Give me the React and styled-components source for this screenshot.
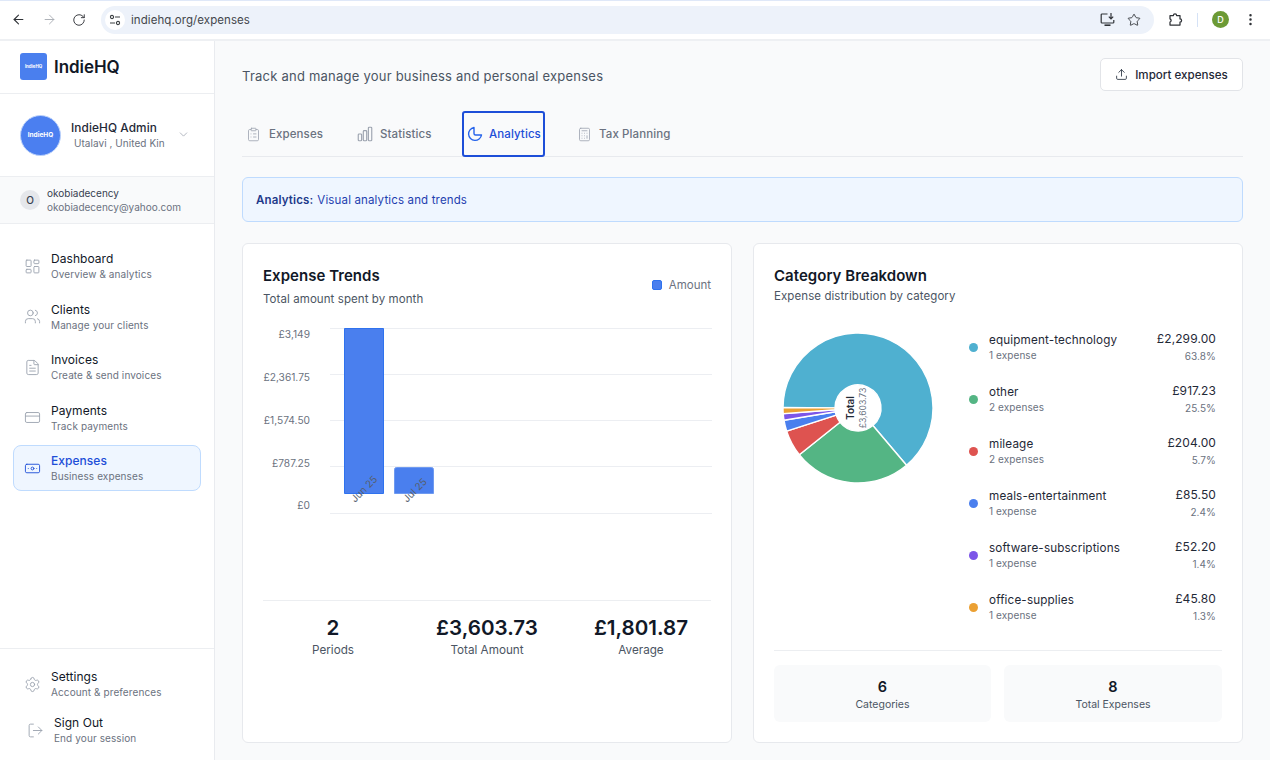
import React from "react";
import styled, { createGlobalStyle } from "styled-components";
import {
  ArrowLeft, ArrowRight, RotateCw, Star, MoreVertical, ChevronDown, LayoutDashboard, Users,
  FileText, CreditCard, Banknote, Settings, LogOut, Upload, ClipboardList, Calculator,
} from "lucide-react";
import { HiOutlineChartBar } from "react-icons/hi2";

const Global = createGlobalStyle`
  html, body { margin: 0; padding: 0; height: 760px; overflow: hidden; background: #f9fafb; }
  body { font-family: Inter, "Liberation Sans", sans-serif; color: #111827; -webkit-font-smoothing: antialiased; }
  * { box-sizing: border-box; }
`;

const Page = styled.div`width: 1270px; height: 760px; display: flex; flex-direction: column; overflow: hidden;`;
const Chrome = styled.header`
  height: 41px; flex: none; background: #fff; border-top: 1px solid #dfe8f8; border-bottom: 2px solid #eef0f3;
  display: flex; align-items: center; padding: 0 8px 1px 11px; color: #2f3237;
`;
const NavIcons = styled.div`display: flex; align-items: center; gap: 15.5px; width: 90px; svg { display: block; }`;
const Omnibox = styled.div`
  width: 1053px; height: 28px; border-radius: 14px; background: #edf2fa; display: flex; align-items: center;
  padding: 0 13px 0 4px; font-size: 11.5px; letter-spacing: .07px; color: #44474c; gap: 6px;
`;
const SiteIcon = styled.span`width: 20px; height: 20px; border-radius: 50%; background: #fff; display: flex; align-items: center; justify-content: center;`;
const Spacer = styled.span`flex: 1;`;
const OmniActions = styled.div`display: flex; align-items: center; gap: 12px; svg { display: block; }`;
const ChromeEnd = styled.div`display: flex; align-items: center; margin-left: 14px; gap: 0;`;
const Divider = styled.span`width: 1px; height: 14px; background: #d5e2f6; margin: 0 14px 0 14px;`;
const ProfileDot = styled.span`width: 17px; height: 17px; border-radius: 50%; background: #6c9a35; color: #fff; font-size: 9px; font-weight: 500; display: flex; align-items: center; justify-content: center; margin-right: 14px;`;

const Body = styled.div`flex: 1; display: flex; min-height: 0;`;
const Sidebar = styled.aside`width: 215px; flex: none; background: #fff; border-right: 1px solid #e9ebef; display: flex; flex-direction: column;`;
const Brand = styled.div`height: 53px; padding: 0 20px 1px; border-bottom: 1px solid #eceef1; display: flex; align-items: center; gap: 7px;`;
const LogoMark = styled.div`
  width: 27px; height: 27px; border-radius: 3px; background: #4a7fee; color: #fff; font-size: 4.4px; font-weight: 700;
  display: flex; align-items: center; justify-content: center;
`;
const BrandName = styled.span`font-size: 17px; font-weight: 600; color: #111827; letter-spacing: -.05px;`;
const Profile = styled.div`height: 82px; display: flex; align-items: center; padding: 0 20px;`;
const Avatar = styled.div`
  width: 41px; height: 41px; border-radius: 50%; background: #4b7ff0; border: 1px solid #bcd2fb; color: #fff; font-size: 6.5px; font-weight: 700;
  display: flex; align-items: center; justify-content: center; flex: none; margin-right: 10px;
`;
const ProfileText = styled.div`display: flex; flex-direction: column; width: 106px; margin-top: 1px;`;
const ProfileName = styled.span`font-size: 11.8px; font-weight: 500; letter-spacing: .1px; color: #1f2937; line-height: 15px;`;
const ProfileSub = styled.span`font-size: 10px; letter-spacing: .05px; color: #6b7280; line-height: 14px; padding-left: 3px;`;
const ProfileChevron = styled.span`display: flex; margin-top: -2px;`;
const Account = styled.div`
  height: 48px; background: #f9fafb; border-top: 1px solid #eceef1; border-bottom: 1px solid #eceef1;
  display: flex; align-items: center; padding: 0 20px; gap: 7px;
`;
const AccountBadge = styled.span`width: 20px; height: 20px; border-radius: 50%; background: #e5e7eb; color: #374151; font-size: 10px; font-weight: 500; display: flex; align-items: center; justify-content: center;`;
const AccountText = styled.div`display: flex; flex-direction: column; font-size: 10px; line-height: 14px; color: #374151; span + span { color: #6b7280; }`;
const Nav = styled.nav`flex: 1; padding: 19px 13px 0; display: flex; flex-direction: column; gap: 4.6px;`;
const NavItem = styled.a`
  height: 46px; border-radius: 8px; display: flex; align-items: center; gap: 10px; padding: 0 0 0 ${p => p.$indent || 10}px;
  border: 1px solid ${p => p.$active ? "#bfdbfe" : "transparent"}; background: ${p => p.$active ? "#eff6ff" : "transparent"};
  svg { color: ${p => p.$active ? "#1d4ed8" : "#9ca3af"}; flex: none; }
`;
const NavText = styled.div`display: flex; flex-direction: column; gap: 1px;`;
const NavTitle = styled.span`font-size: 12px; line-height: 15px; font-weight: ${p => p.$active ? 500 : 400}; color: ${p => p.$active ? "#1d4ed8" : "#111827"}; letter-spacing: .05px;`;
const NavSub = styled.span`font-size: 10px; line-height: 14px; color: #6b7280; letter-spacing: .1px;`;
const SideFoot = styled.div`border-top: 1px solid #eceef1; height: 112px; padding: 12px 13px 0; display: flex; flex-direction: column;`;

const Main = styled.main`flex: 1; min-width: 0; padding: 17px 27px 0; display: flex; flex-direction: column;`;
const TopRow = styled.div`height: 33px; display: flex; align-items: center; justify-content: space-between;`;
const Lead = styled.p`margin: 3px 0 0; font-size: 13px; color: #4b5563; letter-spacing: .23px;`;
const ImportButton = styled.button`
  width: 143px; height: 33px; border: 1px solid #e2e4e8; border-radius: 5px; background: #fff; font: 500 11.6px Inter, sans-serif; color: #1f2937;
  display: flex; align-items: center; justify-content: center; gap: 7px;
`;
const Tabs = styled.div`margin-top: 20px; height: 46px; border-bottom: 1px solid #e8eaee; display: flex;`;
const Tab = styled.div`
  height: 46px; flex: none; display: flex; align-items: center; gap: ${p => p.$iconGap}px; font-size: 11.5px; font-weight: 500; letter-spacing: .1px;
  padding: 0 0 0 ${p => p.$active ? "3px" : "0"};
  margin-left: ${p => p.$gap}px; width: ${p => p.$w}px;
  color: ${p => p.$active ? "#1d4ed8" : "#6b7280"};
  border: ${p => p.$active ? "2px solid #1d4ed8" : "none"}; border-radius: 3px;
  svg { flex: none; color: ${p => p.$active ? "#2563eb" : "#9ca3af"}; }
`;
const Notice = styled.div`
  margin-top: 20px; height: 45px; border: 1px solid #bfdbfe; border-radius: 6px; background: #eff6ff; padding: 0 13px;
  display: flex; align-items: center; font-size: 11.5px; letter-spacing: .15px; color: #1e40af; gap: 4px;
  strong { font-weight: 600; color: #1e3a8a; }
`;
const Cards = styled.div`margin-top: 21px; display: grid; grid-template-columns: 490px 490px; gap: 21px;`;
const Card = styled.section`height: 500px; background: #fff; border: 1px solid #e7e9ed; border-radius: 6px; padding: 22px 20px 0; display: flex; flex-direction: column;`;
const CardHead = styled.div`display: flex; justify-content: space-between;`;
const CardTitle = styled.h2`margin: 0; font-size: 15px; line-height: 20px; font-weight: 600; letter-spacing: .03px; color: #111827;`;
const CardSub = styled.p`margin: ${p => p.$gap}px 0 0; font-size: 11.5px; line-height: 15px; color: #4b5563; letter-spacing: .08px;`;
const Legend = styled.div`display: flex; align-items: center; gap: 7px; height: 16px; margin-top: 11px; font-size: 11.5px; color: #6b7280;`;
const LegendSwatch = styled.span`width: 10px; height: 10px; border-radius: 2px; background: #4a7fee; border: 1px solid #2f72ee;`;
const ChartSvg = styled.svg`display: block; margin-top: 15px; flex: none;`;
const Stats = styled.div`border-top: 1px solid #eceef1; margin-top: 78px; padding-top: 14px; display: grid; grid-template-columns: 140px 1fr 140px; text-align: center;`;
const StatValue = styled.div`font-size: 20.6px; line-height: 26px; font-weight: 600; color: #111827;`;
const StatLabel = styled.div`font-size: 11.7px; line-height: 16px; margin-top: 1px; color: #4b5563;`;
const Breakdown = styled.div`display: flex; margin-top: 12px; height: 327px;`;
const PieSvg = styled.svg`display: block; flex: none; margin: 7px 0 0 0; `;
const CatList = styled.div`margin-left: 27px; width: 247px; display: flex; flex-direction: column; padding-top: 5px;`;
const CatRow = styled.div`height: 52px; display: flex; align-items: center; gap: 11px;`;
const Dot = styled.span`width: 9px; height: 9px; border-radius: 50%; background: ${p => p.$c}; flex: none;`;
const CatMain = styled.div`flex: 1; display: flex; justify-content: space-between;`;
const CatCol = styled.div`display: flex; flex-direction: column; gap: ${p => p.$right ? 2 : 0}px; padding-top: ${p => p.$right ? 0 : 1}px; text-align: ${p => p.$right ? "right" : "left"};`;
const CatName = styled.span`font-size: 11.7px; line-height: 16px; letter-spacing: .14px; color: #1f2937;`;
const CatMeta = styled.span`font-size: 10px; line-height: 14px; letter-spacing: .08px; color: #6b7280;`;
const CatAmount = styled.span`font-size: 12px; line-height: 16px; letter-spacing: .1px; font-weight: 400; color: #1f2937;`;
const Totals = styled.div`border-top: 1px solid #eceef1; margin-top: 7px; padding-top: 14px; display: grid; grid-template-columns: 217px 218px; gap: 13px;`;
const Tile = styled.div`height: 57px; border-radius: 6px; background: #f9fafb; text-align: center; padding-top: 12px;`;
const TileValue = styled.div`font-size: 14.5px; line-height: 20px; font-weight: 600; color: #111827;`;
const TileLabel = styled.div`font-size: 10.5px; line-height: 14px; margin-top: 1px; color: #4b5563;`;

const TuneIcon = () => (
  <svg width="12" height="12" viewBox="0 0 12 12" fill="none" stroke="#3c4043" strokeWidth="1.1">
    <circle cx="3" cy="3" r="1.6" /><path d="M6 3h5M1 9h5" /><circle cx="9" cy="9" r="1.6" />
  </svg>
);
const InstallIcon = () => (
  <svg width="15" height="15" viewBox="0 0 15 15" fill="none" stroke="#2f3237" strokeWidth="1.2">
    <path d="M7.5 2H2a.8.8 0 0 0-.8.8v7.4A.8.8 0 0 0 2 11h11a.8.8 0 0 0 .8-.8V8" />
    <path d="M4.5 13.2h6" strokeWidth="1.6" /><path d="M11 1v5.5M8.8 4.6 11 6.8l2.2-2.2" />
  </svg>
);
const ExtensionIcon = () => (
  <svg width="15" height="15" viewBox="0 0 15 15" fill="none" stroke="#2f3237" strokeWidth="1.25" strokeLinejoin="round">
    <path d="M2 3.5h3.4a1.6 1.6 0 0 1 3.2 0H12v3.4a1.6 1.6 0 0 1 0 3.2V13H2v-2.9a1.7 1.7 0 0 0 0-3.2z" />
  </svg>
);
const PieTabIcon = () => (
  <svg width="16" height="16" viewBox="0 0 16 16" fill="none" stroke="currentColor" strokeWidth="1.4" strokeLinejoin="round">
    <path d="M7 1.5A6.5 6.5 0 1 0 14.5 9H8.5A1.5 1.5 0 0 1 7 7.5Z" />
  </svg>
);

const navItems = [
  [LayoutDashboard, "Dashboard", "Overview & analytics"],
  [Users, "Clients", "Manage your clients"],
  [FileText, "Invoices", "Create & send invoices"],
  [CreditCard, "Payments", "Track payments"],
  [Banknote, "Expenses", "Business expenses", true],
];
const categories = [
  ["equipment-technology", "1 expense", "£2,299.00", "63.8%", "#4fb0d0", 63.8],
  ["other", "2 expenses", "£917.23", "25.5%", "#54b584", 25.5],
  ["mileage", "2 expenses", "£204.00", "5.7%", "#de5350", 5.7],
  ["meals-entertainment", "1 expense", "£85.50", "2.4%", "#4a7fee", 2.4],
  ["software-subscriptions", "1 expense", "£52.20", "1.4%", "#7c55e8", 1.4],
  ["office-supplies", "1 expense", "£45.80", "1.3%", "#eba033", 1.3],
];

const CX = 84, CY = 85, RO = 75, RI = 23;
const pt = (r, deg) => {
  const a = (deg * Math.PI) / 180;
  return `${(CX + r * Math.cos(a)).toFixed(2)} ${(CY + r * Math.sin(a)).toFixed(2)}`;
};
const wedge = (a0, a1) =>
  `M${pt(RI, a0)}L${pt(RO, a0)}A${RO} ${RO} 0 ${a1 - a0 > 180 ? 1 : 0} 1 ${pt(RO, a1)}L${pt(RI, a1)}A${RI} ${RI} 0 ${a1 - a0 > 180 ? 1 : 0} 0 ${pt(RI, a0)}Z`;
let cursor = 180;
const wedges = categories.map(c => {
  const a0 = cursor; cursor += (c[5] / 100) * 360;
  return { d: wedge(a0, cursor), fill: c[4] };
});

const gridYs = [0, 46, 92, 138, 185];
const yLabels = ["£3,149", "£2,361.75", "£1,574.50", "£787.25", "£0"];

export default function App() {
  return (
    <Page>
      <Global />
      <Chrome>
        <NavIcons>
          <ArrowLeft size={15} strokeWidth={1.7} />
          <ArrowRight size={15} strokeWidth={1.5} color="#a9adb3" />
          <RotateCw size={14} strokeWidth={1.6} />
        </NavIcons>
        <Omnibox>
          <SiteIcon><TuneIcon /></SiteIcon>
          indiehq.org/expenses
          <Spacer />
          <OmniActions><InstallIcon /><Star size={14} strokeWidth={1.5} color="#2f3237" /></OmniActions>
        </Omnibox>
        <ChromeEnd>
          <ExtensionIcon />
          <Divider />
          <ProfileDot>D</ProfileDot>
          <MoreVertical size={15} strokeWidth={2} />
        </ChromeEnd>
      </Chrome>
      <Body>
        <Sidebar>
          <Brand><LogoMark>IndieHQ</LogoMark><BrandName>IndieHQ</BrandName></Brand>
          <Profile>
            <Avatar>IndieHQ</Avatar>
            <ProfileText>
              <ProfileName>IndieHQ Admin</ProfileName>
              <ProfileSub>Utalavi , United Kin</ProfileSub>
            </ProfileText>
            <ProfileChevron><ChevronDown size={13} color="#9ca3af" strokeWidth={1.4} /></ProfileChevron>
          </Profile>
          <Account>
            <AccountBadge>O</AccountBadge>
            <AccountText><span>okobiadecency</span><span>okobiadecency@yahoo.com</span></AccountText>
          </Account>
          <Nav>
            {navItems.map(([Icon, title, sub, active]) => (
              <NavItem key={title} $active={active}>
                <Icon size={17} strokeWidth={1.3} />
                <NavText><NavTitle $active={active}>{title}</NavTitle><NavSub>{sub}</NavSub></NavText>
              </NavItem>
            ))}
          </Nav>
          <SideFoot>
            <NavItem><Settings size={17} strokeWidth={1.3} /><NavText><NavTitle>Settings</NavTitle><NavSub>Account &amp; preferences</NavSub></NavText></NavItem>
            <NavItem $indent={13}><LogOut size={17} strokeWidth={1.3} /><NavText><NavTitle>Sign Out</NavTitle><NavSub>End your session</NavSub></NavText></NavItem>
          </SideFoot>
        </Sidebar>
        <Main>
          <TopRow>
            <Lead>Track and manage your business and personal expenses</Lead>
            <ImportButton><Upload size={13} strokeWidth={1.5} />Import expenses</ImportButton>
          </TopRow>
          <Tabs>
            <Tab $gap={4} $w={110} $iconGap={8}><ClipboardList size={15} strokeWidth={1.3} />Expenses</Tab>
            <Tab $gap={0} $w={102} $iconGap={6}><HiOutlineChartBar size={18} />Statistics</Tab>
            <Tab $active $gap={4} $w={83} $iconGap={6}><PieTabIcon />Analytics</Tab>
            <Tab $gap={32} $w={110} $iconGap={7}><Calculator size={15} strokeWidth={1.3} />Tax Planning</Tab>
          </Tabs>
          <Notice><strong>Analytics:</strong> Visual analytics and trends</Notice>
          <Cards>
            <Card>
              <CardHead>
                <div><CardTitle>Expense Trends</CardTitle><CardSub $gap={6}>Total amount spent by month</CardSub></div>
                <Legend><LegendSwatch />Amount</Legend>
              </CardHead>
              <ChartSvg width="449" height="200" viewBox="0 0 449 200" role="img" aria-label="Expense trends chart">
                {gridYs.map(y => <line key={y} x1="67" x2="449" y1={y + 6.5} y2={y + 6.5} stroke="#eceef2" />)}
                {yLabels.map((l, i) => (
                  <text key={l} x="47" y={[16, 59, 102, 145, 187][i]} textAnchor="end" fontSize="10.2" fill="#6b7280" fontFamily="Inter, sans-serif">{l}</text>
                ))}
                <path d="M81.5 6.5h39v165h-39z" fill="#4a7fee" stroke="#2f72ee" />
                <path d="M131.5 171.5v-24a2 2 0 0 1 2-2h35a2 2 0 0 1 2 2v24z" fill="#4a7fee" stroke="#6f9af0" />
                <text transform="translate(92 181) rotate(-45)" fontSize="10" fill="#56606e" fontFamily="Inter, sans-serif">Jun 25</text>
                <text transform="translate(144 181) rotate(-45)" fontSize="10" fill="#56606e" fontFamily="Inter, sans-serif">Jul 25</text>
              </ChartSvg>
              <Stats>
                <div><StatValue>2</StatValue><StatLabel>Periods</StatLabel></div>
                <div><StatValue>£3,603.73</StatValue><StatLabel>Total Amount</StatLabel></div>
                <div><StatValue>£1,801.87</StatValue><StatLabel>Average</StatLabel></div>
              </Stats>
            </Card>
            <Card>
              <CardTitle>Category Breakdown</CardTitle>
              <CardSub $gap={3}>Expense distribution by category</CardSub>
              <Breakdown>
                <PieSvg width="168" height="170" viewBox="0 0 168 170" role="img" aria-label="Category pie chart">
                  {wedges.map(w => <path key={w.d} d={w.d} fill={w.fill} stroke="#fff" strokeWidth="1.4" />)}
                  <text transform={`translate(${CX - 4} ${CY}) rotate(-90)`} textAnchor="middle" fontSize="10" fontWeight="600" fill="#1f2937" fontFamily="Inter, sans-serif">Total</text>
                  <text transform={`translate(${CX + 8} ${CY}) rotate(-90)`} textAnchor="middle" fontSize="8.5" fill="#6b7280" fontFamily="Inter, sans-serif">£3,603.73</text>
                </PieSvg>
                <CatList>
                  {categories.map(c => (
                    <CatRow key={c[0]}>
                      <Dot $c={c[4]} />
                      <CatMain>
                        <CatCol><CatName>{c[0]}</CatName><CatMeta>{c[1]}</CatMeta></CatCol>
                        <CatCol $right><CatAmount>{c[2]}</CatAmount><CatMeta>{c[3]}</CatMeta></CatCol>
                      </CatMain>
                    </CatRow>
                  ))}
                </CatList>
              </Breakdown>
              <Totals>
                <Tile><TileValue>6</TileValue><TileLabel>Categories</TileLabel></Tile>
                <Tile><TileValue>8</TileValue><TileLabel>Total Expenses</TileLabel></Tile>
              </Totals>
            </Card>
          </Cards>
        </Main>
      </Body>
    </Page>
  );
}
